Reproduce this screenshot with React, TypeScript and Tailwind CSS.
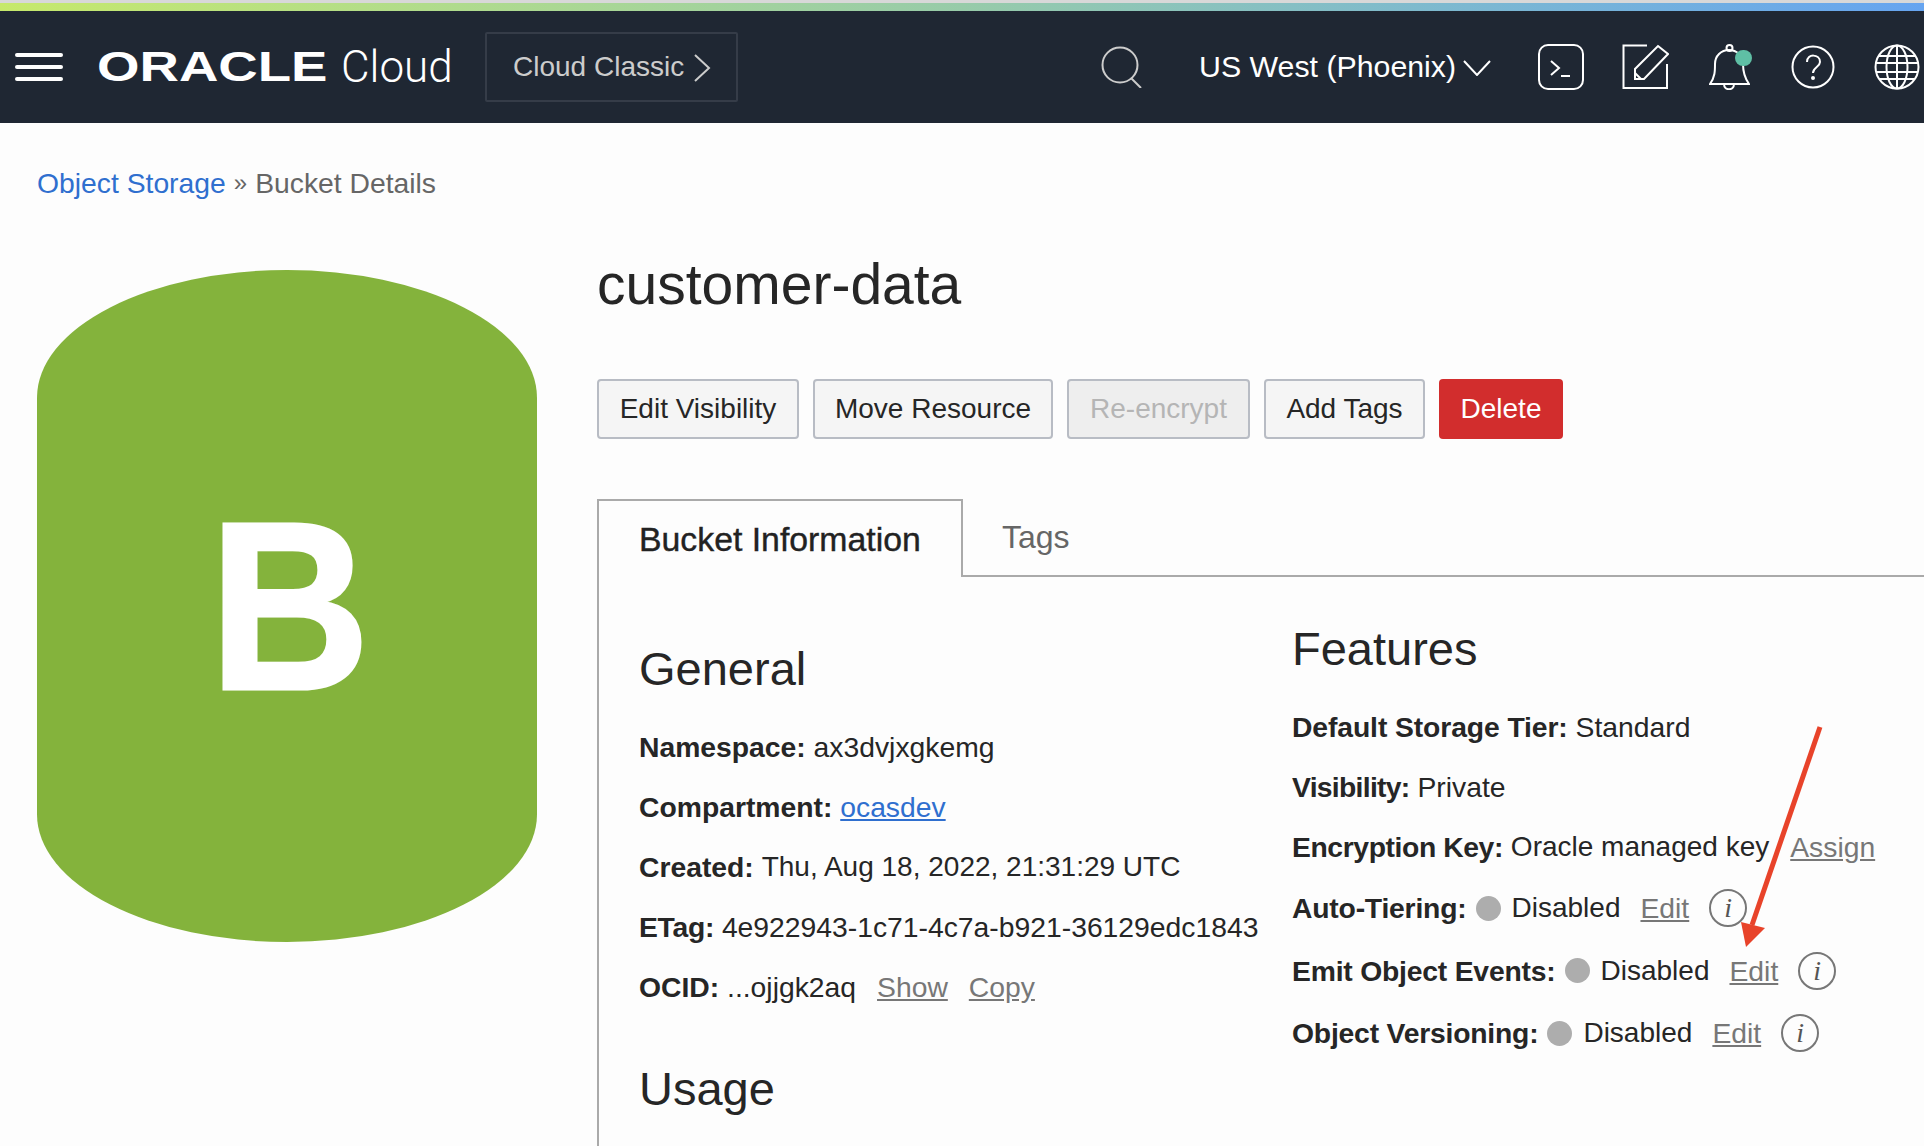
const sans = { fontFamily: '"Liberation Sans", Arial, sans-serif' }

function InfoIcon() {
  return (
    <span className="flex h-[38px] w-[38px] items-center justify-center rounded-full border-2 border-[#777777] font-['Liberation_Serif'] text-[28px] italic leading-none text-[#555555]">
      i
    </span>
  )
}

function GrayLink({ children }: { children: string }) {
  return <a className="text-[#777777] underline underline-offset-2">{children}</a>
}

function Toggle({ label }: { label: string }) {
  return (
    <div className="flex h-[62.500px] items-center">
      <b className="font-bold tracking-[-0.2px]">{label}:</b>
      <span className="ml-[9px] block h-[25px] w-[25px] rounded-full bg-[#adadad]" />
      <span className="ml-[11px] text-[28px]">Disabled</span>
      <span className="ml-[20px]"><GrayLink>Edit</GrayLink></span>
      <span className="ml-[20px]"><InfoIcon /></span>
    </div>
  )
}

function NavIcons() {
  return (
    <div className="ml-[47px] flex items-center text-white">
      {/* Terminal */}
      <svg width="46" height="46" viewBox="0 0 46 46" fill="none" stroke="currentColor" strokeWidth="2">
        <rect x="1" y="1" width="44" height="44" rx="9" />
        <path d="M13 17l8 7-8 7M23 32h9" />
      </svg>
      {/* Edit */}
      <svg className="ml-[38px]" width="47" height="46" viewBox="0 0 47 46" fill="none" stroke="currentColor" strokeWidth="2">
        <path d="M25 1.500H1.500V44H45V20" />
        <path d="M36 2l10 8-24 25H13V25z" />
        <path d="M13 29l6 6" />
      </svg>
      {/* Bell */}
      <div className="relative ml-[40px] h-[46px] w-[43px]">
        <svg width="41" height="46" viewBox="0 0 41 46" fill="none" stroke="currentColor" strokeWidth="2">
          <path d="M1 40c5-7 5-13 5-20 0-8 6-14 14-14s14 6 14 14c0 7 1 13 6 20z" />
          <circle cx="20.500" cy="4" r="3" />
          <path d="M15 40c0 7 10 7 10 0" />
        </svg>
        <span className="absolute left-[26px] top-[6px] h-4 w-[17px] rounded-full bg-[#5fbfa5]" />
      </div>
      {/* Help */}
      <svg className="ml-[39px]" width="44" height="46" viewBox="0 0 44 46" fill="none" stroke="currentColor" strokeWidth="2">
        <circle cx="22" cy="23" r="20.500" />
        <path d="M16 18c0-9 13-8 13 0 0 5-7 5-7 11" />
        <circle cx="22" cy="34" r="1" fill="currentColor" />
      </svg>
      {/* Globe */}
      <svg className="ml-[39px]" width="46" height="46" viewBox="0 0 46 46" fill="none" stroke="currentColor" strokeWidth="2">
        <circle cx="23" cy="23" r="21.500" />
        <ellipse cx="23" cy="23" rx="10.500" ry="21.500" />
        <path d="M23 2v42M5 12h36M2 19h42M2 28h42M5 35h36" />
      </svg>
    </div>
  )
}

export default function App() {
  return (
    <div className="relative h-[1146px] w-[1924px] overflow-hidden bg-[#fdfdfd] text-[28.300px] text-[#262626]" style={sans}>
      {/* Top Bar */}
      <div className="h-[3px] bg-[#d8d8d8]" />
      <div className="h-2 bg-gradient-to-r from-[#c6e96b] via-[#97cba9] to-[#66a4f0]" />
      <div className="flex h-[112px] items-center bg-[#1f2733] text-white">
        <div className="ml-[15px] flex w-12 flex-col gap-2">
          <span className="h-1 rounded-sm bg-white" />
          <span className="h-1 rounded-sm bg-white" />
          <span className="h-1 rounded-sm bg-white" />
        </div>
        <div className="ml-[34px] w-[230px]">
          <span className="block origin-left scale-x-[1.300] whitespace-nowrap text-[42px] font-bold leading-none">ORACLE</span>
        </div>
        <span className="ml-[14px] w-[108px] font-['Roboto'] text-[44px] font-light leading-none">Cloud</span>
        <div className="ml-[36px] flex h-[70px] w-[253px] items-center rounded-[2px] border-2 border-[#353c48] pl-[26px] text-[#cccccc]">
          <span className="text-[28px]">Cloud Classic</span>
          <svg className="ml-[9px] mt-[2px]" width="18" height="30" viewBox="0 0 18 30" fill="none" stroke="currentColor" strokeWidth="2">
            <path d="M2 2l14 13L2 28" />
          </svg>
        </div>
        <svg className="ml-[363px] text-[#cccccc]" width="42" height="42" viewBox="0 0 42 42" fill="none" stroke="currentColor" strokeWidth="2">
          <circle cx="19" cy="19" r="17.500" />
          <path d="M30 32l10 10" />
        </svg>
        <span className="ml-[56px] w-[255px] whitespace-nowrap text-[30.300px]">US West (Phoenix)</span>
        <svg className="ml-[9px] mt-[2px]" width="28" height="16" viewBox="0 0 28 16" fill="none" stroke="currentColor" strokeWidth="2">
          <path d="M1 1l13 14L27 1" />
        </svg>
        <NavIcons />
      </div>

      <div>
        {/* Breadcrumb */}
        <div className="ml-[37px] flex h-[100px] items-center pt-5 text-[28.300px] text-[#666666]">
          <a className="text-[#2f6fcf]">Object Storage</a>
          <span className="ml-2 text-[24px]">»</span>
          <span className="ml-2">Bucket Details</span>
        </div>

        <div className="flex">
          {/* Bucket image */}
          <div className="ml-[37px] mt-[47px] flex h-[672px] w-[500px] items-center justify-center rounded-[50%/19%] bg-[#84b33c] pl-[6px]">
            <span className="scale-x-[0.930] text-[240px] font-bold leading-none text-white [-webkit-text-stroke:3px_white]">B</span>
          </div>

          <div className="ml-[60px] flex-1">
            <h1 className="mt-[29px] h-[127px] text-[57px] leading-[64px]">customer-data</h1>

            {/* Actions */}
            <div className="flex gap-[14px] text-[28px]">
              <button className="h-[60px] w-[202px] rounded-[4px] border-2 border-[#b8bcc4] bg-[#f5f5f5]">Edit Visibility</button>
              <button className="h-[60px] w-[240px] rounded-[4px] border-2 border-[#b8bcc4] bg-[#f5f5f5]">Move Resource</button>
              <button className="h-[60px] w-[183px] rounded-[4px] border-2 border-[#b8bcc4] bg-[#eeeeee] text-[#b5b5b5]">Re-encrypt</button>
              <button className="h-[60px] w-[161px] rounded-[4px] border-2 border-[#b8bcc4] bg-[#f5f5f5]">Add Tags</button>
              <button className="h-[60px] w-[124px] rounded-[4px] bg-[#d22d2d] text-white">Delete</button>
            </div>

            {/* Tabs */}
            <div className="mt-[60px] flex h-[78px]">
              <div className="flex h-[78px] w-[366px] items-center border-x-2 border-t-2 border-[#aaaaaa] pl-[40px] text-[33.800px] text-[#222222]">
                <span className="[-webkit-text-stroke:0.4px_#222222]">Bucket Information</span>
              </div>
              <div className="flex flex-1 items-center border-b-2 border-[#aaaaaa] pl-[39px] text-[32px] text-[#666666]">Tags</div>
            </div>

            {/* Tab panel */}
            <div className="flex h-[600px] border-l-2 border-[#aaaaaa] pl-[40px]">
              <div className="w-[653px]">
                <h2 className="mt-[64px] text-[47px] leading-[56px]">General</h2>
                <div className="mt-5 flex h-[60px] items-center"><b>Namespace:</b>&nbsp;ax3dvjxgkemg</div>
                <div className="flex h-[60px] items-center"><b>Compartment:</b>&nbsp;<a className="text-[#2f6fcf] underline underline-offset-2">ocasdev</a></div>
                <div className="flex h-[60px] items-center"><b>Created:</b>&nbsp;<span className="text-[28px]">Thu, Aug 18, 2022, 21:31:29 UTC</span></div>
                <div className="flex h-[60px] items-center"><b className="tracking-[-0.3px]">ETag:</b>&nbsp;4e922943-1c71-4c7a-b921-36129edc1843</div>
                <div className="flex h-[60px] items-center">
                  <b>OCID:</b>&nbsp;...ojjgk2aq
                  <span className="ml-[21px]"><GrayLink>Show</GrayLink></span>
                  <span className="ml-[21px]"><GrayLink>Copy</GrayLink></span>
                </div>
                <h2 className="mt-[44px] text-[47px] leading-[56px]">Usage</h2>
              </div>
              <div className="flex-1">
                <h2 className="mt-[44px] text-[47px] leading-[56px]">Features</h2>
                <div className="mt-5 flex h-[60px] items-center"><b className="tracking-[-0.1px]">Default Storage Tier:</b>&nbsp;Standard</div>
                <div className="flex h-[60px] items-center"><b className="tracking-[-0.700px]">Visibility:</b>&nbsp;Private</div>
                <div className="flex h-[60px] items-center">
                  <b className="tracking-[-0.400px]">Encryption Key:</b>&nbsp;<span className="text-[28px]">Oracle managed key</span>
                  <span className="ml-[21px]"><GrayLink>Assign</GrayLink></span>
                </div>
                <Toggle label="Auto-Tiering" />
                <Toggle label="Emit Object Events" />
                <Toggle label="Object Versioning" />
              </div>
            </div>
          </div>
        </div>
      </div>

      {/* Red annotation arrow */}
      <svg className="absolute left-[1730px] top-[720px]" width="100" height="235" viewBox="0 0 100 235" fill="none">
        <path d="M90 7L22 205" stroke="#e8432a" strokeWidth="5" />
        <path d="M16 227L11 202 35 208z" fill="#e8432a" />
      </svg>
    </div>
  )
}
